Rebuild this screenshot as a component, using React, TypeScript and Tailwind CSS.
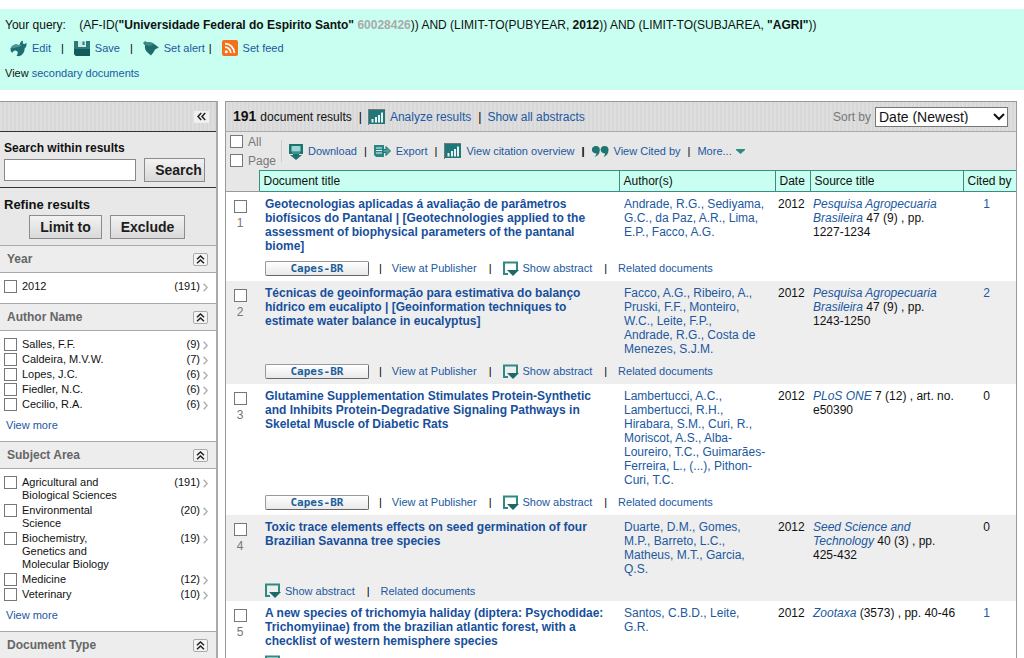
import { useState } from 'react';
import type { ReactNode } from 'react';

interface Facet {
  label: string;
  count: number;
}

interface FacetGroup {
  title: string;
  items: Facet[];
  more?: boolean;
}

interface Result {
  title: string;
  authors: string;
  journal: string;
  issue: string;
  pages: string;
  cited: number;
  publisher?: boolean;
}

const FACETS: FacetGroup[] = [
  { title: 'Year', items: [{ label: '2012', count: 191 }] },
  {
    title: 'Author Name',
    more: true,
    items: [
      { label: 'Salles, F.F.', count: 9 },
      { label: 'Caldeira, M.V.W.', count: 7 },
      { label: 'Lopes, J.C.', count: 6 },
      { label: 'Fiedler, N.C.', count: 6 },
      { label: 'Cecilio, R.A.', count: 6 },
    ],
  },
  {
    title: 'Subject Area',
    more: true,
    items: [
      { label: 'Agricultural and Biological Sciences', count: 191 },
      { label: 'Environmental Science', count: 20 },
      { label: 'Biochemistry, Genetics and Molecular Biology', count: 19 },
      { label: 'Medicine', count: 12 },
      { label: 'Veterinary', count: 10 },
    ],
  },
  {
    title: 'Document Type',
    items: [],
  },
];

const RESULTS: Result[] = [
  {
    title:
      'Geotecnologias aplicadas á avaliação de parâmetros biofísicos do Pantanal | [Geotechnologies applied to the assessment of biophysical parameters of the pantanal biome]',
    authors: 'Andrade, R.G., Sediyama, G.C., da Paz, A.R., Lima, E.P., Facco, A.G.',
    journal: 'Pesquisa Agropecuaria Brasileira',
    issue: '47 (9) , pp.',
    pages: '1227-1234',
    cited: 1,
    publisher: true,
  },
  {
    title:
      'Técnicas de geoinformação para estimativa do balanço hídrico em eucalipto | [Geoinformation techniques to estimate water balance in eucalyptus]',
    authors: 'Facco, A.G., Ribeiro, A., Pruski, F.F., Monteiro, W.C., Leite, F.P., Andrade,\u00a0R.G., Costa de Menezes, S.J.M.',
    journal: 'Pesquisa Agropecuaria Brasileira',
    issue: '47 (9) , pp.',
    pages: '1243-1250',
    cited: 2,
    publisher: true,
  },
  {
    title:
      'Glutamine Supplementation Stimulates Protein-Synthetic and Inhibits Protein-Degradative Signaling Pathways in Skeletal Muscle of Diabetic Rats',
    authors:
      'Lambertucci, A.C., Lambertucci, R.H., Hirabara, S.M., Curi, R., Moriscot, A.S., Alba-Loureiro, T.C., Guimarães-Ferreira, L., (...), Pithon-Curi, T.C.',
    journal: 'PLoS ONE',
    issue: '7 (12) , art. no.',
    pages: 'e50390',
    cited: 0,
    publisher: true,
  },
  {
    title: 'Toxic trace elements effects on seed germination of four Brazilian Savanna tree species',
    authors: 'Duarte, D.M., Gomes, M.P., Barreto, L.C., Matheus, M.T., Garcia, Q.S.',
    journal: 'Seed Science and Technology',
    issue: '40 (3) , pp.',
    pages: '425-432',
    cited: 0,
  },
  {
    title:
      'A new species of trichomyia haliday (diptera: Psychodidae: Trichomyiinae) from the brazilian atlantic forest, with a checklist of western hemisphere species',
    authors: 'Santos, C.B.D., Leite, G.R.',
    journal: 'Zootaxa',
    issue: '(3573) , pp.',
    pages: '40-46',
    cited: 1,
  },
];

const STRIPES = 'bg-[repeating-linear-gradient(90deg,#dedede_0_2px,#d8d8d8_2px_4px)]';
const BOX = 'block h-[13px] w-[13px] shrink-0 appearance-none border border-[#777] bg-white checked:bg-[#2f6f6c]';
const BUTTON =
  'h-6 border border-[#8c8c8c] bg-linear-to-b from-[#f2f2f2] to-[#d9d9d9] text-[14px] leading-none font-bold text-[#1c1c1c]';

/* ---------- icons ---------- */

function EditIcon() {
  return (
    <svg width="17" height="17" viewBox="0 0 17 17" className="shrink-0">
      <path
        d="M.5 8.500C1.500 6 4 4.500 6 4.300L8.500 5 10 4.500C9.800 2.500 11 .9 13 .8L12.700 3.300 14.300 4.300 16.500 2.800C16.800 5.500 16 7.500 14.600 8.600 14.800 12 12.500 15.500 9 16.300L6.500 15.800C7.500 14.500 8.200 13 7.500 11.500L5.500 10.500 3.500 11 2.500 12.800 .8 11.500Z"
        fill="#1c6f70"
      />
      <path d="M.5 8.500C1.500 6 4 4.500 6 4.300L8.500 5 10 4.500 12 5.500 8 7 3 8Z" fill="#4f9694" />
    </svg>
  );
}

function SaveIcon() {
  return (
    <svg width="16" height="16" viewBox="0 0 16 16" className="shrink-0">
      <path d="M0 1H16V16H2L0 14Z" fill="#2a7a7a" />
      <path d="M0 9H16V16H2L0 14Z" fill="#145a5c" />
      <path d="M4 1H12V7H4Z" fill="#c5efe5" />
      <path d="M8.5 1.5H10.5V5H8.5Z" fill="#2a7a7a" />
    </svg>
  );
}

function AlertIcon() {
  return (
    <svg width="16" height="16" viewBox="0 0 16 16" className="shrink-0">
      <path d="M.5 3.500C.5 1.500 2.500 .8 4 2.500 7 2 10 3 11.500 4.300L15.800 7.400 12 9.500C11 12 9 14 8 15.600L4.800 12.800C2.500 11 1.500 8.500 2 5.300Z" fill="#1d6c6b" />
      <path d="M.5 3.500C.5 1.500 2.500 .8 4 2.500 7 2 10 3 11.500 4.300L7 6 2 5.300Z" fill="#3c8883" />
    </svg>
  );
}

function FeedIcon() {
  return (
    <svg width="16" height="16" viewBox="0 0 16 16" className="shrink-0">
      <rect width="16" height="16" rx="2" fill="#f4701b" />
      <circle cx="4.3" cy="11.8" r="1.5" fill="#fff" />
      <path d="M3 7.2A5.8 5.8 0 0 1 8.8 13M3 3.7A9.3 9.3 0 0 1 12.3 13" fill="none" stroke="#fff" strokeWidth="1.8" />
    </svg>
  );
}

function ChartIcon() {
  return (
    <svg width="17" height="16" viewBox="0 0 17 16" className="shrink-0">
      <path d="M0 0H17V1H1V16H0Z" fill="#777" />
      <path d="M1 1H17V15H1Z" fill="#1f7777" />
      <path d="M3.500 10H5.500V13.500H3.500ZM7 8H9V13.500H7ZM10 6H12V13.500H10ZM13 3.500H15V13.500H13Z" fill="#e6f4f1" />
    </svg>
  );
}

function DownloadIcon() {
  return (
    <svg width="14" height="17" viewBox="0 0 14 17" className="shrink-0">
      <path d="M0 1H14V11H10V12H13L7 17 1 12H4V11H0Z" fill="#1d7371" />
      <path d="M2.500 3H11.500V8.500H2.500Z" fill="#9bd6d2" />
      <path d="M3 10H11" stroke="#68aaa6" />
    </svg>
  );
}

function ExportIcon() {
  return (
    <svg width="17" height="14" viewBox="0 0 17 14" className="shrink-0">
      <path d="M0 1H10V13H2L0 11Z" fill="#2b8582" />
      <path d="M2 4H8M2 6.500H8M2 9H8" stroke="#e6f4f1" strokeWidth="1.200" />
      <path d="M9 5.500H12V2.500L16.500 7 12 11.500V8.500H9Z" fill="#4d9d98" stroke="#1d7371" />
    </svg>
  );
}

function QuoteIcon() {
  return (
    <svg width="17" height="13" viewBox="0 0 17 13" className="shrink-0">
      <path
        d="M4 1a3.600 3.600 0 0 1 3.800 4C7.800 8.500 6 11 2.500 12 4 10.500 4.500 9.500 4.300 8.300A3.700 3.700 0 1 1 4 1ZM12.700 1a3.600 3.600 0 0 1 3.800 4c0 3.500-1.800 6-5.300 7 1.500-1.500 2-2.500 1.800-3.700A3.700 3.700 0 1 1 12.700 1Z"
        fill="#207471"
      />
    </svg>
  );
}

function AbstractIcon() {
  return (
    <svg width="16" height="15" viewBox="0 0 16 15" className="shrink-0">
      <path d="M5 13H1V1.500H14V9" fill="none" stroke="#2f8a82" strokeWidth="2" />
      <path d="M4 9H16L10 15Z" fill="#1b6a66" />
    </svg>
  );
}

function Chevrons({ up }: { up?: boolean }) {
  return (
    <svg width="9" height="9" viewBox="0 0 9 9">
      <path
        d={up ? 'M1 4.200 4.500 1 8 4.200M1 8.200 4.500 5 8 8.200' : 'M4.200 1 1 4.500 4.200 8M8.200 1 5 4.500 8.200 8'}
        fill="none"
        stroke="#222"
        strokeWidth="1.500"
      />
    </svg>
  );
}

/* ---------- small parts ---------- */

function A({ children, className = 'text-[#2158a0]' }: { children: ReactNode; className?: string }) {
  return (
    <a href="#" className={`hover:underline ${className}`}>
      {children}
    </a>
  );
}

function IconLink({ icon, children }: { icon: ReactNode; children: ReactNode }) {
  return (
    <a href="#" className="flex items-center gap-[5px] text-[#2158a0]">
      {icon}
      <span>{children}</span>
    </a>
  );
}

function Bar({ className = 'mx-[7px]' }: { className?: string }) {
  return <span className={`text-black ${className}`}>|</span>;
}

function QueryBar() {
  return (
    <section className="mt-[9px] bg-[#c8fff0] px-[5px] pt-2 pb-[9px] text-[11px] leading-4">
      <p className="text-[12px]">
        Your query: &nbsp;&nbsp; (AF-ID(<b>"Universidade Federal do Espirito Santo"</b>{' '}
        <b className="text-[#aaa]">60028426</b>)) AND (LIMIT-TO(PUBYEAR, <b>2012</b>)) AND (LIMIT-TO(SUBJAREA, <b>"AGRI"</b>))
      </p>
      <nav className="mt-[7px] flex h-4 items-center pl-[5px]">
        <IconLink icon={<EditIcon />}>Edit</IconLink>
        <Bar className="mx-[10px]" />
        <IconLink icon={<SaveIcon />}>Save</IconLink>
        <Bar className="mx-[10px]" />
        <IconLink icon={<AlertIcon />}>Set alert</IconLink>
        <Bar className="mr-[10px] ml-1" />
        <IconLink icon={<FeedIcon />}>Set feed</IconLink>
      </nav>
      <p className="mt-[9px]">
        View <A>secondary documents</A>
      </p>
    </section>
  );
}

function FacetSection({ group }: { group: FacetGroup }) {
  const [open, setOpen] = useState(true);

  return (
    <section className="bg-white">
      <header className="flex h-7 items-center justify-between border-y border-[#aaa] bg-[#ededed] pr-2 pl-[7px]">
        <h3 className="text-[12px] font-bold text-[#666]">{group.title}</h3>
        <button
          aria-label={`Toggle ${group.title}`}
          onClick={() => setOpen(!open)}
          className="flex h-[13px] w-[15px] items-center justify-center rounded-xs border border-[#aaa] bg-[#f4f4f4]"
        >
          <Chevrons up />
        </button>
      </header>
      {open && group.items.length > 0 && (
        <div className={group.more ? 'px-1 pt-[7px] pb-[9px]' : 'px-1 pt-[7px] pb-2'}>
          <ul>
            {group.items.map((item) => (
              <li key={item.label} className="flex items-start pb-[2px] text-[11px] leading-[13px]">
                <label className="flex gap-[5px]">
                  <input type="checkbox" className={BOX} />
                  <span className="w-[105px]">{item.label}</span>
                </label>
                <span className="ml-auto">({item.count})</span>
                <svg width="5" height="9" viewBox="0 0 5 9" className="mt-[3px] mr-1 ml-[3px]">
                  <path d="M.7 .7 4.200 4.500 .7 8.300" fill="none" stroke="#aaa" strokeWidth="1.300" />
                </svg>
              </li>
            ))}
          </ul>
          {group.more && (
            <A className="mt-[5px] ml-[2px] block w-fit text-[11px] leading-[14px] text-[#2158a0]">View more</A>
          )}
        </div>
      )}
    </section>
  );
}

function Sidebar() {
  return (
    <aside className="w-[218px] shrink-0 border-t border-r-2 border-t-[#999] border-r-[#aaa] bg-[#e8e8e8]">
      <div className={`flex h-[30px] items-center justify-end border-b border-[#333] pr-[7px] ${STRIPES}`}>
        <button aria-label="Collapse" className="flex h-3 w-[15px] items-center justify-center bg-[#f0f0f0]">
          <Chevrons />
        </button>
      </div>
      <div className="h-[56px] border-b border-[#333] px-1 pt-2">
        <label htmlFor="within" className="block text-[12px] leading-[16px] font-bold">
          Search within results
        </label>
        <div className="mt-[2px] flex items-center gap-2">
          <input id="within" type="text" className="h-[22px] w-[132px] border border-[#888] bg-white px-1 text-[12px]" />
          <button className={`w-[61px] pl-2 ${BUTTON}`}>Search</button>
        </div>
      </div>
      <div className="h-[57px] px-1 pt-2">
        <h2 className="text-[13px] leading-[18px] font-bold">Refine results</h2>
        <div className="mt-px ml-[25px] flex gap-2">
          <button className={`w-[73px] ${BUTTON}`}>Limit to</button>
          <button className={`w-[75px] ${BUTTON}`}>Exclude</button>
        </div>
      </div>
      {FACETS.map((group) => (
        <FacetSection key={group.title} group={group} />
      ))}
    </aside>
  );
}

function Toolbar() {
  return (
    <div className="flex h-[38px] items-center text-[11px]">
      <div className="flex w-[55px] flex-col gap-[2px] pl-1 text-[12px] text-[#777]">
        {['All', 'Page'].map((name) => (
          <label key={name} className="flex h-[17px] items-center gap-[5px]">
            <input type="checkbox" className={BOX} />
            {name}
          </label>
        ))}
      </div>
      <div className="flex h-[22px] items-center border-l border-[#ccc] pl-[7px]">
        <IconLink icon={<DownloadIcon />}>Download</IconLink>
        <Bar />
        <IconLink icon={<ExportIcon />}>Export</IconLink>
        <Bar />
        <IconLink icon={<ChartIcon />}>View citation overview</IconLink>
        <Bar className="mx-[7px] font-bold" />
        <IconLink icon={<QuoteIcon />}>View Cited by</IconLink>
        <Bar />
        <a href="#" className="flex items-center gap-1 text-[#2158a0]">
          More...
          <svg width="9" height="5" viewBox="0 0 9 5">
            <path d="M0 0H9V1L4.500 5 0 1Z" fill="#2f8a82" />
          </svg>
        </a>
      </div>
    </div>
  );
}

function ResultRow({ result, index }: { result: Result; index: number }) {
  const [showAbstract, setShowAbstract] = useState(false);

  return (
    <tbody className={index % 2 === 0 ? 'bg-[#eeeeee]' : 'bg-white'}>
      <tr className="align-top">
        <td rowSpan={2} className="pt-2 text-[#777]">
          <div className="flex w-7 flex-col items-center gap-[3px]">
            <input type="checkbox" aria-label={`Select document ${index}`} className={BOX} />
            {index}
          </div>
        </td>
        <td className="pt-[5px] pr-1 pl-[6px] font-bold">
          <A className="text-[#174f9c]">{result.title}</A>
        </td>
        <td className="pt-[5px] pr-[9px] pl-[5px]">
          <A>{result.authors}</A>
        </td>
        <td className="pt-[5px] pl-[3px]">2012</td>
        <td className="pt-[5px] pl-[3px]">
          <A className="text-[#2158a0] italic">{result.journal}</A> {result.issue}{' '}
          <span className="whitespace-nowrap">{result.pages}</span>
        </td>
        <td className="pt-[5px] pr-[6px] text-center">{result.cited > 0 ? <A>{result.cited}</A> : result.cited}</td>
      </tr>
      <tr>
        <td colSpan={5} className={result.publisher ? 'h-7 pt-[2px] pl-[6px]' : 'h-[25px] pt-1 pl-[6px]'}>
          <div className="flex items-center text-[11px]">
            {result.publisher && (
              <>
                <button className="h-[15px] w-[104px] rounded-xs border border-[#999] border-r-[#666] border-b-[#666] bg-linear-to-b from-white to-[#e9e9e9] font-['DejaVu_Sans_Mono',monospace] text-[11px] leading-none font-bold text-[#1c5f9c]">
                  Capes-BR
                </button>
                <Bar className="mx-[10px]" />
                <A>View at Publisher</A>
                <Bar className="mr-[11px] ml-3" />
              </>
            )}
            <button className="flex items-center gap-1 text-[#2158a0]" onClick={() => setShowAbstract(!showAbstract)}>
              <AbstractIcon />
              Show abstract
            </button>
            <Bar className="mr-[11px] ml-3" />
            <A>Related documents</A>
          </div>
        </td>
      </tr>
    </tbody>
  );
}

function Results() {
  return (
    <main className="mr-[7px] min-w-0 flex-1 border border-[#999] bg-[#e7e7e7]">
      <div className={`flex h-[30px] items-center border-b border-[#aaa] pr-2 pl-[7px] text-[12px] ${STRIPES}`}>
        <b className="mr-1 text-[14px]">191</b> document results
        <Bar className="mr-[6px] ml-[7px]" />
        <IconLink icon={<ChartIcon />}>Analyze results</IconLink>
        <Bar className="mr-[6px] ml-[7px]" />
        <A>Show all abstracts</A>
        <label htmlFor="sort" className="mr-1 ml-auto text-[#777]">
          Sort by
        </label>
        <div className="relative">
          <select id="sort" className="block h-5 w-[133px] appearance-none border border-[#777] bg-white pl-[3px] text-[14px] leading-none">
            <option>Date (Newest)</option>
            <option>Date (Oldest)</option>
            <option>Cited by</option>
            <option>Relevance</option>
          </select>
          <svg width="12" height="8" viewBox="0 0 12 8" className="pointer-events-none absolute top-[6px] right-[3px]">
            <path d="M1 1 6 6 11 1" fill="none" stroke="#111" strokeWidth="2" />
          </svg>
        </div>
      </div>
      <Toolbar />
      <table className="w-full table-fixed border-collapse text-[12px] leading-[14px]">
        <colgroup>
          <col className="w-[33px]" />
          <col />
          <col className="w-[156px]" />
          <col className="w-[35px]" />
          <col className="w-[153px]" />
          <col className="w-[53px]" />
        </colgroup>
        <thead>
          <tr className="h-[21px] text-left">
            <td className="border-b border-[#999]"></td>
            {['Document title', 'Author(s)', 'Date', 'Source title', 'Cited by'].map((name) => (
              <th key={name} scope="col" className="border-t border-b border-l border-[#3a8c84] bg-[#c8fff0] pl-1 font-normal whitespace-nowrap">
                {name}
              </th>
            ))}
          </tr>
        </thead>
        {RESULTS.map((result, i) => (
          <ResultRow key={result.title} result={result} index={i + 1} />
        ))}
      </table>
    </main>
  );
}

export default function App() {
  return (
    <div className="flex h-screen flex-col overflow-hidden bg-white font-['Liberation_Sans',Arial,sans-serif] text-[#111]">
      <QueryBar />
      <div className="mt-[11px] flex items-start gap-[7px]">
        <Sidebar />
        <Results />
      </div>
    </div>
  );
}
